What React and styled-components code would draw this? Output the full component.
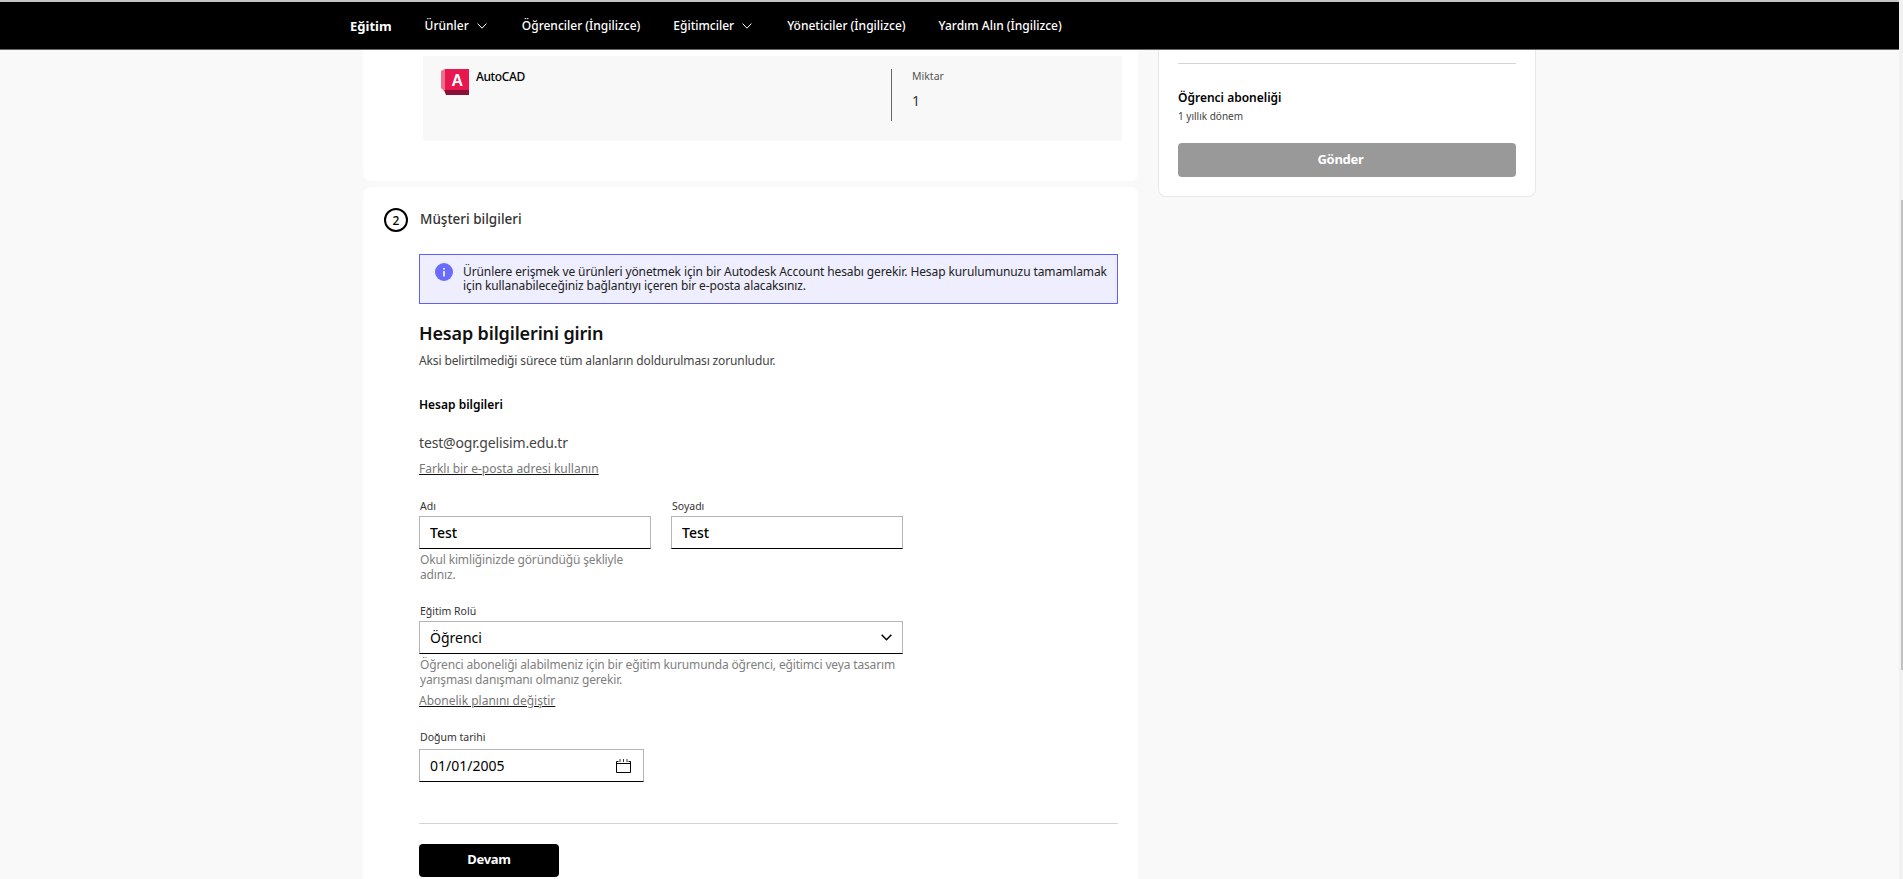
import React from "react";
import styled, { createGlobalStyle } from "styled-components";

const GlobalStyle = createGlobalStyle`
  html, body {
    margin: 0;
    height: 100%;
    overflow: hidden;
    background: #f9f9f9;
    font-family: "Noto Sans", Roboto, sans-serif;
    color: #000;
  }
`;

const Page = styled.div`
  display: flex;
  height: 100vh;
  padding-top: 2px;
  box-sizing: border-box;
  background: linear-gradient(#c4c4c4 2px, #f9f9f9 2px);
`;

const Main = styled.div`
  flex: 1;
  min-width: 0;
  overflow: hidden;
  display: flex;
  flex-direction: column;
`;

const ScrollTrack = styled.div`
  width: 4px;
  margin-top: -2px;
  background: #f1f1f1;
  display: flex;
  justify-content: flex-end;
`;

const ScrollThumb = styled.div`
  width: 2px;
  height: 470px;
  margin-top: 200px;
  background: #c1c1c1;
`;

const TopBar = styled.header`
  flex: none;
  height: 47px;
  background: #000;
  border-bottom: 1px solid #666;
  display: flex;
  align-items: center;
  padding-left: 350px;
  color: #fff;
  font-size: 12px;
  font-weight: 500;
`;

const Brand = styled.span`
  font-size: 13px;
  font-weight: 700;
  margin-right: 33px;
`;

const NavItem = styled.span`
  display: flex;
  align-items: center;
  gap: 8px;
  margin-right: ${(p) => (p.$menu ? 35 : 33)}px;
`;

const Content = styled.div`
  flex: 1;
  min-height: 0;
  display: flex;
  align-items: flex-start;
  gap: 20px;
  padding-left: 363px;
`;

const LeftColumn = styled.div`
  width: 775px;
  display: flex;
  flex-direction: column;
  gap: 6px;
`;

const ProductCard = styled.section`
  height: 131px;
  padding: 6px 16px 0 60px;
  box-sizing: border-box;
  background: #fff;
  border-radius: 0 0 8px 8px;
`;

const ProductBox = styled.div`
  width: 699px;
  height: 85px;
  padding: 13px 0 0 18px;
  box-sizing: border-box;
  background: #f8f8f8;
  display: flex;
`;

const ProductName = styled.div`
  width: 450px;
  display: flex;
  gap: 7px;
  font-size: 12px;
  font-weight: 500;
  line-height: 16px;
  letter-spacing: -0.4px;
`;

const QuantityCell = styled.div`
  height: 52px;
  border-left: 1px solid #666;
  padding-left: 20px;
`;

const QuantityLabel = styled.div`
  font-size: 10.5px;
  line-height: 14px;
  color: #555;
`;

const QuantityValue = styled.div`
  margin-top: 10px;
  font-size: 14px;
  line-height: 16px;
  color: #333;
`;

const FormCard = styled.section`
  height: 800px;
  padding: 21px 20px 0 21px;
  background: #fff;
  border-radius: 8px 8px 0 0;
`;

const StepRow = styled.div`
  display: flex;
  align-items: flex-start;
  gap: 12px;
`;

const StepBadge = styled.span`
  width: 24px;
  height: 24px;
  box-sizing: border-box;
  border: 2px solid #000;
  border-radius: 50%;
  display: flex;
  align-items: center;
  justify-content: center;
  font-size: 12px;
  font-weight: 500;
`;

const StepTitle = styled.h2`
  margin: 2px 0 0;
  font-size: 13.5px;
  line-height: 18px;
  font-weight: 500;
  color: #333;
`;

const FormBody = styled.div`
  margin-top: 22px;
  padding-left: 35px;
`;

const Notice = styled.div`
  width: 699px;
  height: 50px;
  box-sizing: border-box;
  border: 1px solid #5f60ff;
  background: #eeeeff;
  padding: 10px 0 0 15px;
  display: flex;
  gap: 10px;
  font-size: 12px;
  line-height: 14px;
  letter-spacing: -0.1px;
  white-space: nowrap;
  color: #222;
`;

const NoticeIcon = styled.svg`
  flex: none;
  width: 18px;
  height: 18px;
  margin-top: -2px;
`;

const Heading = styled.h1`
  margin: 19px 0 0;
  font-size: 18px;
  line-height: 20px;
  font-weight: 600;
  letter-spacing: -0.15px;
  color: #111;
`;

const Subtitle = styled.p`
  margin: 10px 0 0;
  font-size: 12px;
  line-height: 16px;
  letter-spacing: -0.13px;
  color: #444;
`;

const SectionLabel = styled.div`
  margin-top: 28px;
  font-size: 12px;
  line-height: 16px;
  font-weight: 600;
`;

const Email = styled.div`
  margin-top: 22px;
  font-size: 14px;
  line-height: 16px;
  letter-spacing: -0.15px;
  color: #444;
`;

const TextLink = styled.a`
  display: block;
  width: fit-content;
  margin-top: ${(p) => p.$top || 10}px;
  font-size: 12px;
  line-height: 16px;
  color: #777;
  text-decoration: underline;
  text-decoration-color: #111;
`;

const FieldRow = styled.div`
  display: flex;
  gap: 20px;
  margin-top: ${(p) => p.$top}px;
`;

const Field = styled.div`
  width: ${(p) => p.$width}px;
`;

const FieldLabel = styled.label`
  display: block;
  padding-left: 1px;
  margin-bottom: ${(p) => p.$gap || 3}px;
  font-size: 10.5px;
  line-height: 14px;
  color: #333;
`;

const FieldBox = styled.div`
  height: 33px;
  box-sizing: border-box;
  border: 1px solid #b5b5b5;
  border-bottom-color: #000;
  padding: 0 ${(p) => p.$right || 10}px 0 10px;
  display: flex;
  align-items: center;
  justify-content: space-between;
  font-size: 14px;
  font-weight: ${(p) => p.$weight || 400};
`;

const Hint = styled.div`
  margin-top: 3px;
  padding-left: 1px;
  font-size: 12px;
  line-height: 15px;
  letter-spacing: -0.15px;
  white-space: nowrap;
  color: #808080;
`;

const Rule = styled.hr`
  margin: 41px 0 0;
  width: 699px;
  border: 0;
  border-top: 1px solid #d4d4d4;
`;

const PrimaryButton = styled.button`
  display: block;
  width: 140px;
  height: 33px;
  margin-top: 20px;
  padding: 0 0 3px;
  border: 0;
  border-radius: 4px;
  background: #000;
  color: #fff;
  font-family: inherit;
  font-size: 13px;
  font-weight: 700;
  letter-spacing: -0.3px;
`;

const Summary = styled.aside`
  width: 378px;
  height: 147px;
  box-sizing: border-box;
  padding: 13px 19px 0 19px;
  background: #fff;
  border: 1px solid #e8e8e8;
  border-top: 0;
  border-radius: 0 0 8px 8px;
`;

const SummaryRule = styled.hr`
  margin: 0;
  border: 0;
  border-top: 1px solid #d4d4d4;
`;

const PlanName = styled.div`
  margin-top: 26px;
  font-size: 12px;
  line-height: 16px;
  font-weight: 600;
`;

const PlanTerm = styled.div`
  margin-top: 3px;
  font-size: 10px;
  line-height: 14px;
  color: #444;
`;

const SubmitButton = styled.button`
  display: block;
  width: 100%;
  height: 34px;
  margin-top: 20px;
  padding: 0 13px 3px 0;
  border: 0;
  border-radius: 4px;
  background: #999;
  color: #fff;
  font-family: inherit;
  font-size: 13px;
  font-weight: 700;
  letter-spacing: -0.3px;
`;

const Chevron = ({ size = 10, width = 1, color = "#fff" }) => (
  <svg width={size} height={size * 0.6} viewBox="0 0 10 6" fill="none">
    <path d="M.6.6 5 5.2 9.4.6" stroke={color} strokeWidth={width} />
  </svg>
);

const AutoCadLogo = () => (
  <svg width="28" height="26" viewBox="0 0 28 26">
    <path d="M0 2 4 0v20l-1 2-3-3z" fill="#f06d8d" />
    <path d="M3 21h25v5H5z" fill="#8c0f35" />
    <rect x="4" width="24" height="21" fill="#e8174f" />
    <text x="16" y="16.5" textAnchor="middle" fill="#fff" fontFamily="Liberation Sans" fontWeight="700" fontSize="16">
      A
    </text>
  </svg>
);

const InfoIcon = () => (
  <NoticeIcon viewBox="0 0 18 18">
    <circle cx="9" cy="9" r="9" fill="#6a6bff" />
    <rect x="8.2" y="8" width="1.6" height="5.5" fill="#fff" />
    <rect x="8.2" y="5" width="1.6" height="1.6" fill="#fff" />
  </NoticeIcon>
);

const CalendarIcon = () => (
  <svg width="15" height="15" viewBox="0 0 15 15" fill="none" stroke="#000">
    <path d="M.5 3.5v11h14v-11M.5 3.5h2M12.5 3.5h2M.5 5.5h14" />
    <path d="M4 1v3M7.5 1v3M11 1v3" strokeWidth=".8" />
  </svg>
);

export default function App() {
  return (
    <Page>
      <GlobalStyle />
      <Main>
        <TopBar>
          <Brand>Eğitim</Brand>
          <NavItem $menu>
            Ürünler <Chevron />
          </NavItem>
          <NavItem>Öğrenciler (İngilizce)</NavItem>
          <NavItem $menu>
            Eğitimciler <Chevron />
          </NavItem>
          <NavItem>Yöneticiler (İngilizce)</NavItem>
          <NavItem>Yardım Alın (İngilizce)</NavItem>
        </TopBar>
        <Content>
          <LeftColumn>
            <ProductCard>
              <ProductBox>
                <ProductName>
                  <AutoCadLogo />
                  AutoCAD
                </ProductName>
                <QuantityCell>
                  <QuantityLabel>Miktar</QuantityLabel>
                  <QuantityValue>1</QuantityValue>
                </QuantityCell>
              </ProductBox>
            </ProductCard>
            <FormCard>
              <StepRow>
                <StepBadge>2</StepBadge>
                <StepTitle>Müşteri bilgileri</StepTitle>
              </StepRow>
              <FormBody>
                <Notice>
                  <InfoIcon />
                  <span>
                    Ürünlere erişmek ve ürünleri yönetmek için bir Autodesk Account hesabı gerekir. Hesap kurulumunuzu tamamlamak
                    <br />
                    için kullanabileceğiniz bağlantıyı içeren bir e-posta alacaksınız.
                  </span>
                </Notice>
                <Heading>Hesap bilgilerini girin</Heading>
                <Subtitle>Aksi belirtilmediği sürece tüm alanların doldurulması zorunludur.</Subtitle>
                <SectionLabel>Hesap bilgileri</SectionLabel>
                <Email>test@ogr.gelisim.edu.tr</Email>
                <TextLink>Farklı bir e-posta adresi kullanın</TextLink>
                <FieldRow $top={22}>
                  <Field $width={232}>
                    <FieldLabel>Adı</FieldLabel>
                    <FieldBox $weight={500}>Test</FieldBox>
                    <Hint>
                      Okul kimliğinizde göründüğü şekliyle
                      <br />
                      adınız.
                    </Hint>
                  </Field>
                  <Field $width={232}>
                    <FieldLabel>Soyadı</FieldLabel>
                    <FieldBox $weight={500}>Test</FieldBox>
                  </Field>
                </FieldRow>
                <FieldRow $top={22}>
                  <Field $width={484}>
                    <FieldLabel>Eğitim Rolü</FieldLabel>
                    <FieldBox>
                      Öğrenci
                      <Chevron size={11} width={1.4} color="#000" />
                    </FieldBox>
                    <Hint>
                      Öğrenci aboneliği alabilmeniz için bir eğitim kurumunda öğrenci, eğitimci veya tasarım
                      <br />
                      yarışması danışmanı olmanız gerekir.
                    </Hint>
                  </Field>
                </FieldRow>
                <TextLink $top={6}>Abonelik planını değiştir</TextLink>
                <FieldRow $top={21}>
                  <Field $width={225}>
                    <FieldLabel $gap={5}>Doğum tarihi</FieldLabel>
                    <FieldBox $right={12}>
                      01/01/2005
                      <CalendarIcon />
                    </FieldBox>
                  </Field>
                </FieldRow>
                <Rule />
                <PrimaryButton>Devam</PrimaryButton>
              </FormBody>
            </FormCard>
          </LeftColumn>
          <Summary>
            <SummaryRule />
            <PlanName>Öğrenci aboneliği</PlanName>
            <PlanTerm>1 yıllık dönem</PlanTerm>
            <SubmitButton>Gönder</SubmitButton>
          </Summary>
        </Content>
      </Main>
      <ScrollTrack>
        <ScrollThumb />
      </ScrollTrack>
    </Page>
  );
}
